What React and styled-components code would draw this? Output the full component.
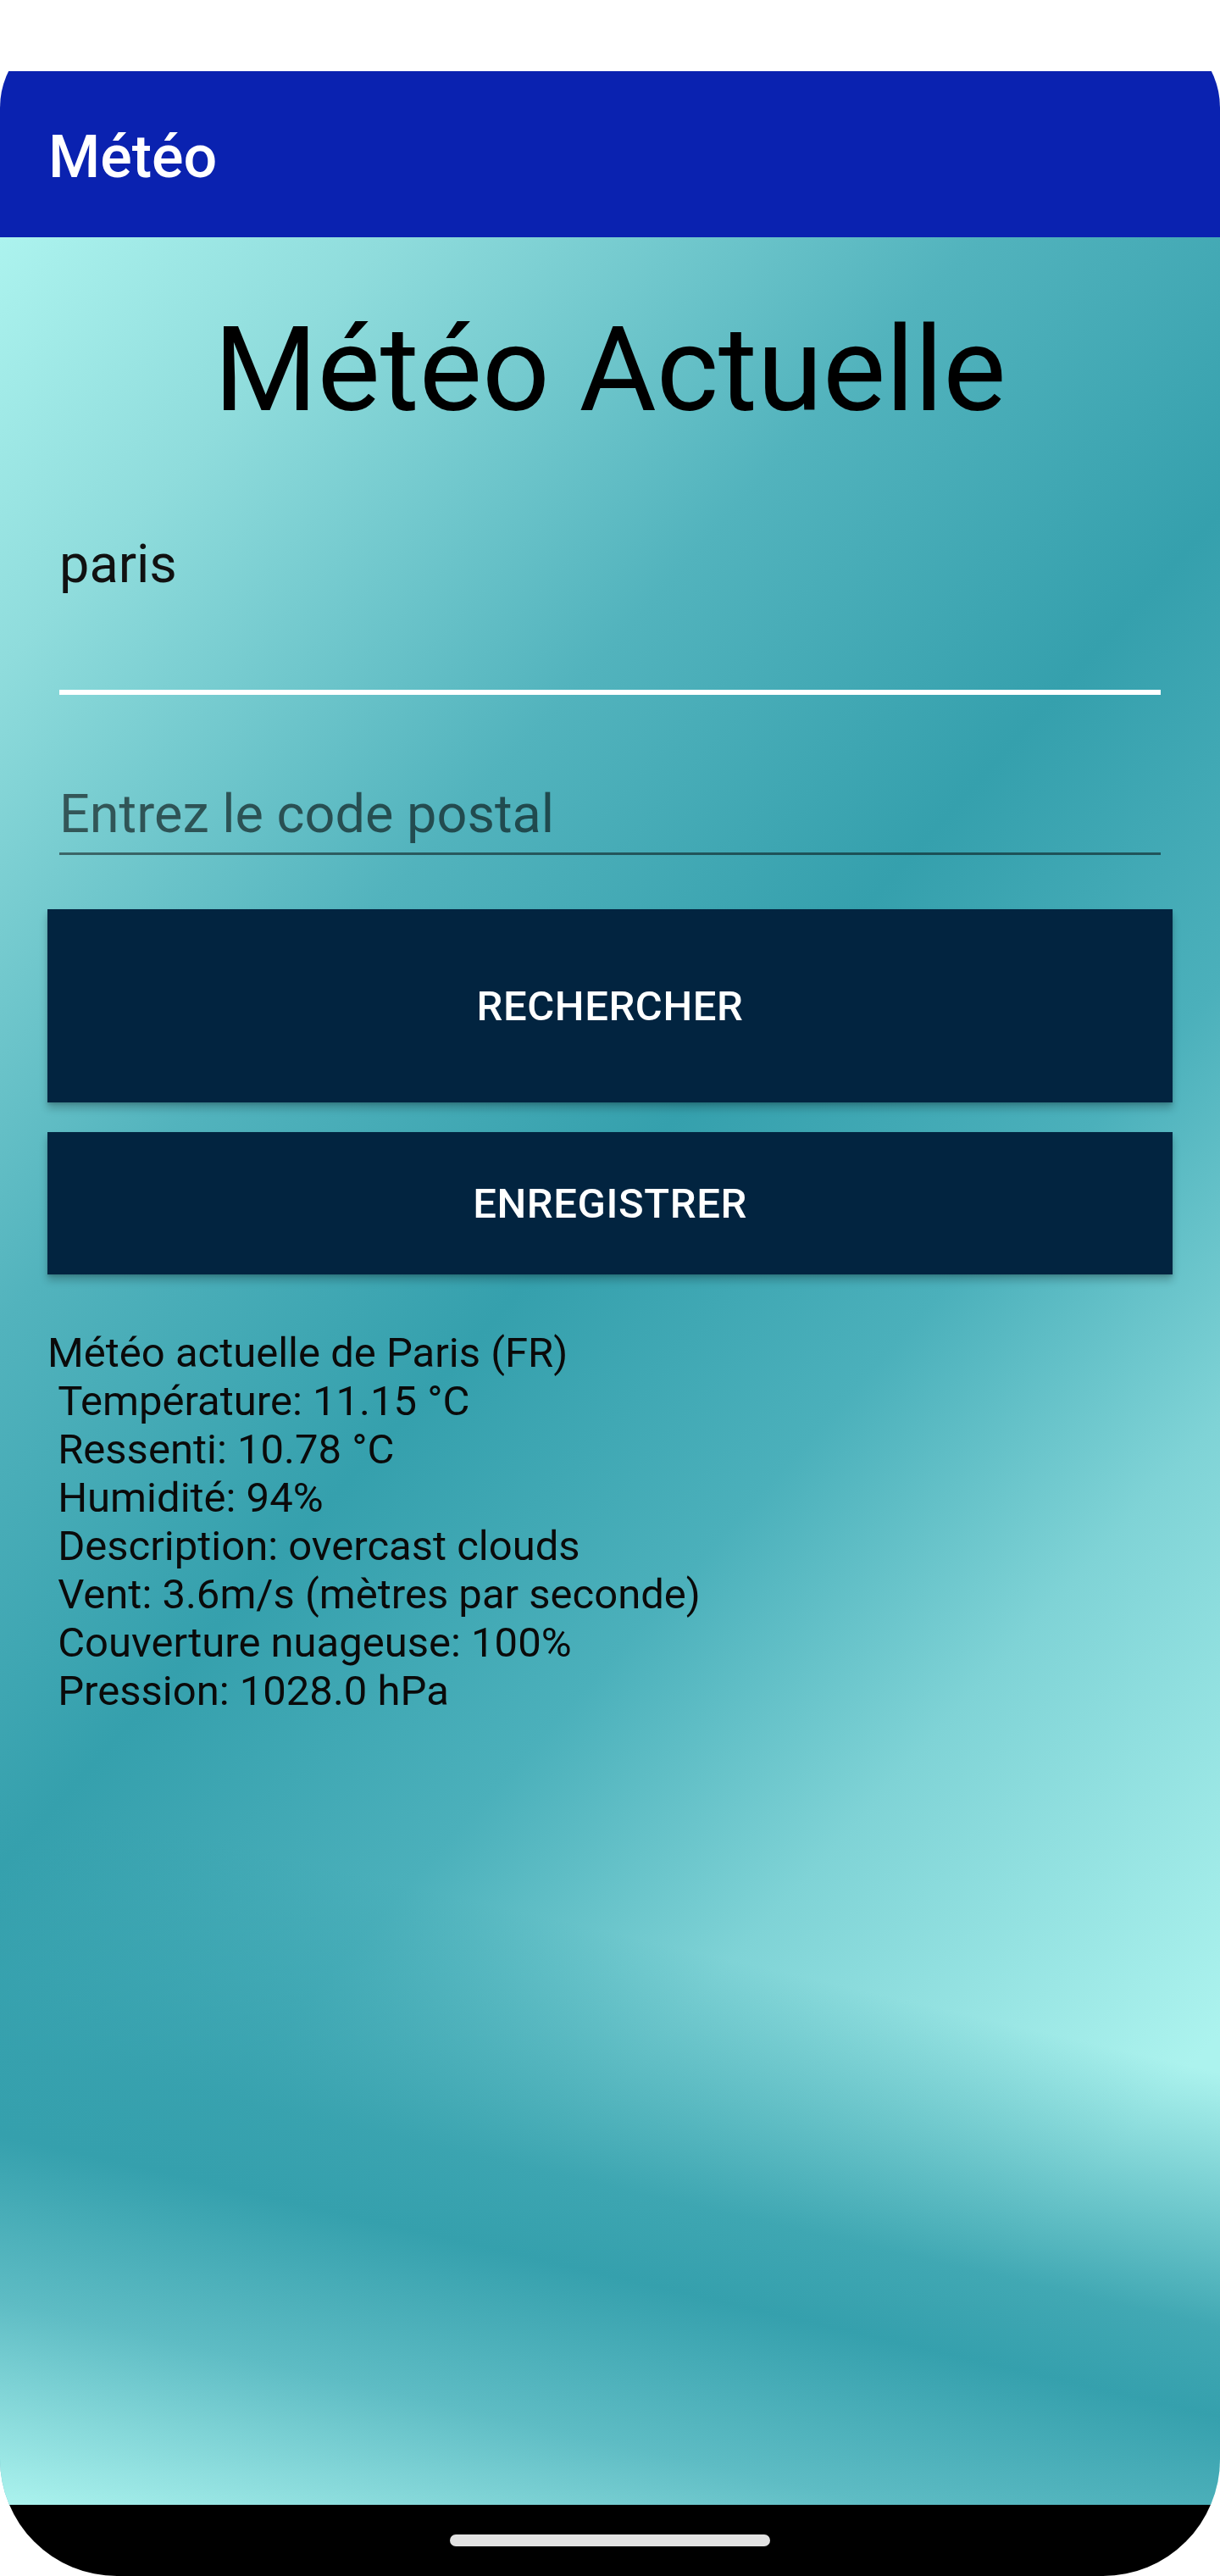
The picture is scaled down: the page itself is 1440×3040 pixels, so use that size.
import React from "react";
import styled, { createGlobalStyle } from "styled-components";

const GlobalStyle = createGlobalStyle`
  html, body {
    margin: 0;
    padding: 0;
    background: #ffffff;
    font-family: Roboto, "Noto Sans", "Liberation Sans", sans-serif;
  }
  * { box-sizing: border-box; }
`;

const LIGHT = "#acf3ee";
const DARK = "#35a0ad";

const Screen = styled.div`
  width: 1440px;
  height: 3010px;
  margin-top: 30px;
  display: flex;
  flex-direction: column;
  overflow: hidden;
  border-radius: 97px 97px 138px 138px;
`;

const StatusBar = styled.div`
  height: 54px;
  background: #ffffff;
`;

const AppBar = styled.header`
  height: 196px;
  background: #0a22b0;
  color: #ffffff;
  display: flex;
  align-items: center;
  padding: 6px 0 0 57px;
  font-size: 70px;
  font-weight: 500;
`;

const Content = styled.main`
  flex: 1;
  display: flex;
  flex-direction: column;
  background:
    linear-gradient(
      193deg,
      rgba(53, 160, 173, 0) 0%,
      rgba(53, 160, 173, 0) 72%,
      rgba(53, 160, 173, 0.9) 82%,
      ${DARK} 85.5%,
      #5ebcc4 92%,
      ${LIGHT} 100%
    ),
    linear-gradient(
      132deg,
      ${LIGHT} 0%,
      #8fdcdc 12%,
      #52b3bd 30%,
      ${DARK} 45%,
      #4bb0bb 58%,
      #7fd3d6 70%,
      ${LIGHT} 87%,
      ${LIGHT} 100%
    );
`;

const Title = styled.h1`
  margin: 74px 0 0;
  text-align: center;
  font-size: 140px;
  font-weight: 400;
  line-height: normal;
  color: #000000;
`;

const Field = styled.input`
  display: block;
  margin: ${(p) => p.$mt}px 70px 0;
  width: calc(100% - 140px);
  padding: ${(p) => p.$pt}px 0 ${(p) => p.$pb}px 0;
  background: transparent;
  border: none;
  border-bottom: ${(p) =>
    p.$focused ? "6px solid #ffffff" : "3px solid rgba(0, 0, 0, 0.5)"};
  font-family: Roboto, "Liberation Sans", sans-serif;
  font-size: 63px;
  line-height: 74px;
  height: ${(p) => p.$pt + p.$pb + 74 + (p.$focused ? 6 : 3)}px;
  color: #111111;
  outline: none;

  &::placeholder {
    color: rgba(0, 0, 0, 0.58);
  }
`;

const ActionButton = styled.button`
  display: block;
  margin: ${(p) => p.$mt}px 56px 0;
  width: calc(100% - 112px);
  height: ${(p) => p.$h}px;
  background: #022440;
  color: #ffffff;
  border: none;
  border-radius: 0;
  font-family: Roboto, "Liberation Sans", sans-serif;
  font-size: 49px;
  font-weight: 500;
  letter-spacing: 0.6px;
  text-transform: uppercase;
  box-shadow: 0 7px 9px rgba(0, 0, 0, 0.22), 0 2px 3px rgba(0, 0, 0, 0.12);
  cursor: pointer;
`;

const Report = styled.pre`
  margin: 64px 56px 0;
  font-family: Roboto, "Liberation Sans", sans-serif;
  font-size: 49px;
  line-height: 57px;
  color: #0a0a0a;
  white-space: pre-wrap;
`;

const NavBar = styled.div`
  height: 84px;
  background: #000000;
  display: flex;
  justify-content: center;
  padding-top: 35px;
`;

const HomePill = styled.div`
  width: 378px;
  height: 14px;
  border-radius: 7px;
  background: #e2e2e2;
`;

const report = [
  "Météo actuelle de Paris (FR)",
  " Température: 11.15 °C",
  " Ressenti: 10.78 °C",
  " Humidité: 94%",
  " Description: overcast clouds",
  " Vent: 3.6m/s (mètres par seconde)",
  " Couverture nuageuse: 100%",
  " Pression: 1028.0 hPa",
].join("\n");

export default function App() {
  return (
    <>
      <GlobalStyle />
      <Screen>
        <StatusBar />
        <AppBar>Météo</AppBar>
        <Content>
          <Title>Météo Actuelle</Title>
          <Field $mt={90} $pt={20} $pb={112} $focused defaultValue="paris" />
          <Field $mt={93} $pt={10} $pb={9} placeholder="Entrez le code postal" />
          <ActionButton $mt={64} $h={228}>Rechercher</ActionButton>
          <ActionButton $mt={35} $h={168}>Enregistrer</ActionButton>
          <Report>{report}</Report>
        </Content>
        <NavBar>
          <HomePill />
        </NavBar>
      </Screen>
    </>
  );
}
